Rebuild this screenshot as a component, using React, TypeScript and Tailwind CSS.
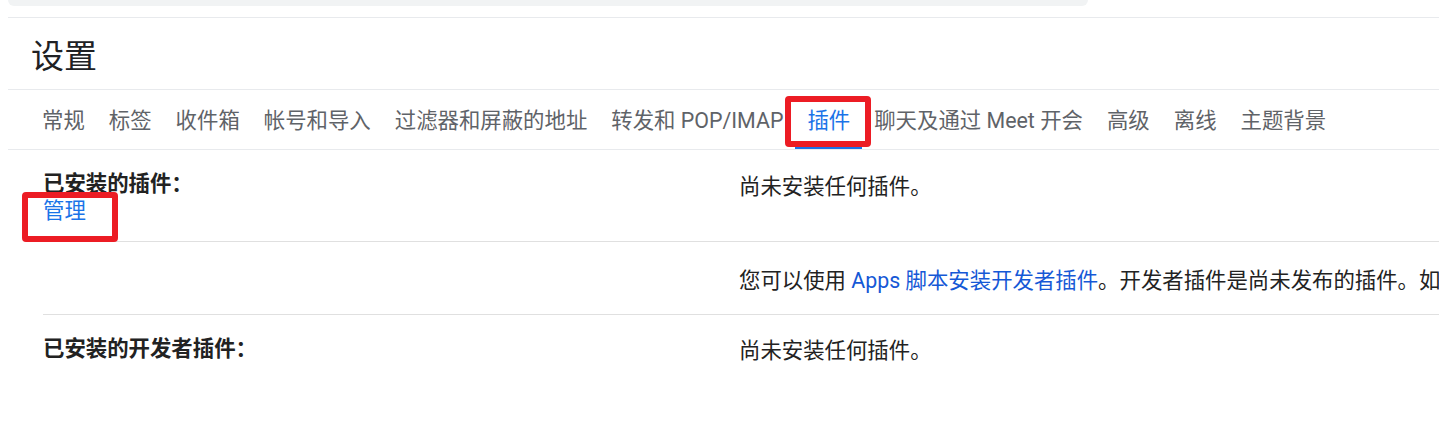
import React from 'react'

const TABS = [
  '常规',
  '标签',
  '收件箱',
  '帐号和导入',
  '过滤器和屏蔽的地址',
  '转发和 POP/IMAP',
  '插件',
  '聊天及通过 Meet 开会',
  '高级',
  '离线',
  '主题背景',
]

const ACTIVE = '插件'

const SANS = "font-['Roboto','Noto_Sans_CJK_SC',sans-serif]"

export default function App() {
  return (
    <div className={`relative w-[1439px] h-[444px] overflow-hidden bg-white text-[#222] ${SANS}`}>
      {/* search bar tail + header */}
      <div className="ml-[8px]">
        <div className="h-[18px] border-b border-[#e8eaed]">
          <div className="w-[1080px] h-[6px] rounded-b-[8px] bg-[#f1f3f4]" />
        </div>

        <div className="h-[72px] border-b border-[#e8eaed] pl-[23px] pt-[6px] flex items-center">
          <h1 className="text-[33px] leading-none text-[#202124] font-normal">设置</h1>
        </div>

        {/* tabs */}
        <div className="flex h-[60px] border-b border-[#e8eaed] pl-[22px]">
          {TABS.map((t) => (
            <div
              key={t}
              className={`flex items-center px-3 pt-[3px] border-t-4 border-b-4 border-t-transparent text-[21.4px] whitespace-nowrap ${
                t === ACTIVE ? 'border-b-[#1a73e8] text-[#1a73e8]' : 'border-b-transparent text-[#5f6368]'
              }`}
            >
              {t}
            </div>
          ))}
        </div>

        {/* settings rows */}
        <div className="ml-[35px] text-[21.4px] leading-[27px]">
          <div className="grid grid-cols-[696px_1fr] border-b border-[#e0e0e0] h-[92px]">
            <div className="pt-[20px]">
              <div className="font-bold">已安装的插件：</div>
              <a className="text-[#1a73e8]">管理</a>
            </div>
            <div className="pt-[23px]">尚未安装任何插件。</div>
          </div>

          <div className="grid grid-cols-[696px_1fr] border-b border-[#e0e0e0] h-[73px]">
            <div />
            <div className="pt-[25px] whitespace-nowrap overflow-hidden">
              您可以使用 <a className="text-[#1558d6]">Apps 脚本安装开发者插件</a>。开发者插件是尚未发布的插件。如
            </div>
          </div>

          <div className="grid grid-cols-[696px_1fr] h-[92px]">
            <div className="pt-[20px] font-bold">已安装的开发者插件：</div>
            <div className="pt-[22px]">尚未安装任何插件。</div>
          </div>
        </div>
      </div>

      {/* red annotation boxes */}
      <div className="absolute left-[785px] top-[96px] w-[86px] h-[51px] border-[6px] border-[#ec1c24] rounded-[4px]" />
      <div className="absolute left-[22px] top-[192px] w-[96px] h-[50px] border-[6px] border-[#ec1c24] rounded-[4px]" />
    </div>
  )
}
